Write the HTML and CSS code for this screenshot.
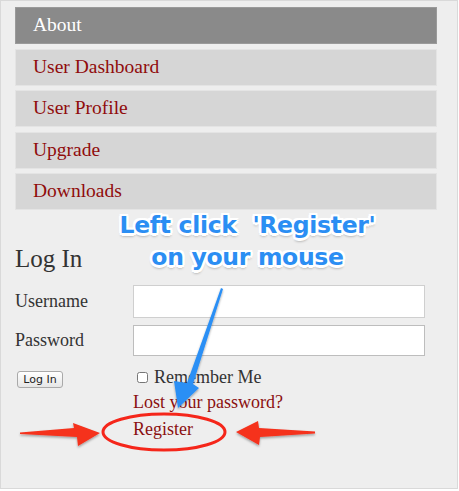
FILE: index.html
```html
<!DOCTYPE html>
<html lang="en">
<head>
    <meta charset="UTF-8">
    <meta name="viewport" content="width=device-width, initial-scale=1.0">
    <title>Log In</title>
    <link rel="stylesheet" href="styles.css">
</head>
<body>

    <div class="frame">
        <!-- Sidebar menu -->
        <ul class="menu">
            <li class="active"><a href="#">About</a></li>
            <li><a href="#">User Dashboard</a></li>
            <li><a href="#">User Profile</a></li>
            <li><a href="#">Upgrade</a></li>
            <li><a href="#">Downloads</a></li>
        </ul>

        <!-- Login widget -->
        <div class="login">
            <h2>Log In</h2>
            <div class="form-grid">
                <label for="user">Username</label>
                <input type="text" id="user" class="field">
                <label for="pass">Password</label>
                <input type="password" id="pass" class="field field-pass">
                <div><button class="login-btn">Log In</button></div>
                <label class="remember"><input type="checkbox"> Remember Me</label>
                <div></div>
                <div class="links">
                    <a href="#">Lost your password?</a>
                    <a href="#">Register</a>
                </div>
            </div>
        </div>

        <!-- Screenshot annotation -->
        <div class="callout">Left click&nbsp; 'Register'<br>on your mouse</div>
        <svg class="marks" width="458" height="489" viewBox="0 0 458 489">
            <defs>
                <filter id="shade" x="-20%" y="-20%" width="140%" height="160%">
                    <feDropShadow dx="0" dy="1.5" stdDeviation="1.2" flood-color="#000" flood-opacity="0.35"/>
                </filter>
            </defs>
            <polygon filter="url(#shade)" fill="#2a8ff5"
                points="221,288 223,289 193,384 199,388 178,408 174,381 187,383"/>
            <ellipse cx="164" cy="432" rx="61" ry="18" fill="none" stroke="#f5261a" stroke-width="3"/>
            <polygon filter="url(#shade)" fill="#f5301c"
                points="20,432.5 74,428 73,423 100,433 78,446 77,437 20,434"/>
            <polygon filter="url(#shade)" fill="#f5301c"
                points="236,432 258,421 259,428 315,431.5 315,433.5 260,437 259,445"/>
        </svg>
    </div>

</body>
</html>
```

FILE: styles.css
```css
body {
    margin: 0;
    background-color: #fff;
    font-family: "Liberation Serif", "DejaVu Serif", serif;
}

.frame {
    position: relative;
    box-sizing: border-box;
    width: 458px;
    height: 489px;
    border: 1px solid #d9d9d9;
    background-color: #eeeeee;
    padding: 6px 20px 0 14px;
}

.menu {
    list-style: none;
    margin: 0;
    padding: 0;
    display: flex;
    flex-direction: column;
    gap: 4.5px;
}

.menu li {
    height: 35px;
    border: 1px solid #e4e4e4;
    background-color: #d6d6d6;
}

.menu li a {
    display: block;
    padding-left: 17px;
    line-height: 34px;
    font-size: 19.5px;
    color: #900c0c;
    text-decoration: none;
}

.menu li.active {
    background-color: #8a8a8a;
    border-color: #9a9a9a;
}

.menu li.active a {
    color: #fff;
}

.login {
    margin-top: 34px;
    color: #333;
}

.login h2 {
    margin: 0 0 11px;
    font-size: 25px;
    font-weight: normal;
    line-height: 30px;
}

.form-grid {
    display: grid;
    grid-template-columns: 118px 292px;
    row-gap: 7px;
    align-items: center;
    font-size: 18px;
}

.field {
    box-sizing: border-box;
    height: 33px;
    margin: 0;
    border: 1px solid #cfcfcf;
    background-color: #fff;
}

.field-pass {
    height: 31px;
    border-color: #bdbdbd;
}

.login-btn {
    margin: 7px 0 0 2px;
    height: 17px;
    width: 46px;
    padding: 0;
    font-family: "DejaVu Sans", sans-serif;
    font-size: 11px;
    color: #222;
    border: 1px solid #a9a9a9;
    border-radius: 3px;
    background: linear-gradient(#ffffff, #e6e6e6);
}

.remember {
    margin-top: 4px;
    display: flex;
    align-items: center;
    gap: 6px;
}

.remember input {
    margin: 0 0 0 4px;
    width: 11px;
    height: 11px;
}

.links {
    display: flex;
    flex-direction: column;
    align-items: flex-start;
    line-height: 27px;
    margin-top: -6px;
}

.links a {
    color: #8b1010;
    text-decoration: none;
}

.callout {
    position: absolute;
    top: 208px;
    left: 94px;
    width: 305px;
    text-align: center;
    font-family: "DejaVu Sans", "Liberation Sans", sans-serif;
    font-weight: bold;
    font-size: 23.5px;
    line-height: 32px;
    letter-spacing: -0.3px;
    color: #2b8ef3;
    text-shadow: -2px -2px 0 #fff, 2px -2px 0 #fff, -2px 2px 0 #fff, 2px 2px 0 #fff,
        0 -2.5px 0 #fff, 0 2.5px 0 #fff, -2.5px 0 0 #fff, 2.5px 0 0 #fff, 0 3px 3px rgba(0, 0, 0, 0.45);
}

.marks {
    position: absolute;
    top: -1px;
    left: -1px;
    pointer-events: none;
}
```
